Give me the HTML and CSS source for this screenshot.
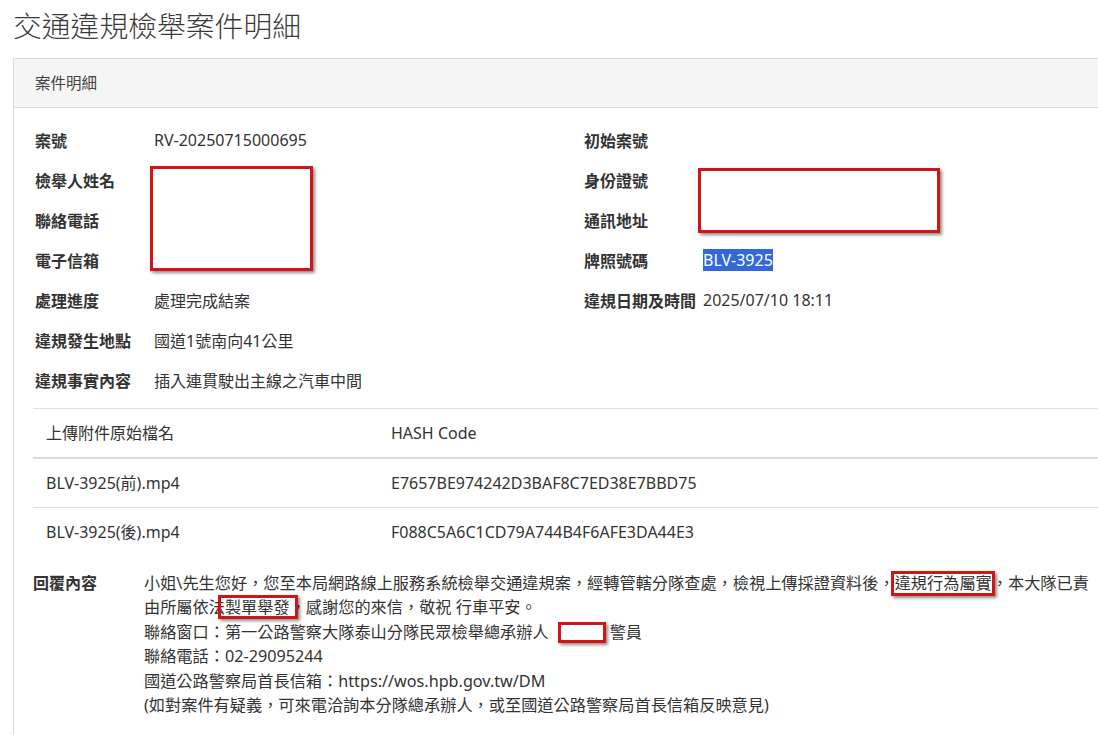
FILE: index.html
```html
<!DOCTYPE html>
<html lang="zh-Hant">
<head>
<meta charset="utf-8">
<title>交通違規檢舉案件明細</title>
<link rel="stylesheet" href="styles.css">
</head>
<body>
<div class="page">
  <h1 class="title">交通違規檢舉案件明細</h1>
  <section class="card">
    <div class="card-head">案件明細</div>
    <div class="card-body">
      <div class="details">
        <div class="lbl">案號</div><div class="val">RV-20250715000695</div>
        <div class="lbl">初始案號</div><div class="val"></div>
        <div class="lbl">檢舉人姓名</div><div class="val"></div>
        <div class="lbl">身份證號</div><div class="val"></div>
        <div class="lbl">聯絡電話</div><div class="val"></div>
        <div class="lbl">通訊地址</div><div class="val"></div>
        <div class="lbl">電子信箱</div><div class="val"></div>
        <div class="lbl">牌照號碼</div><div class="val"><span class="sel">BLV-3925</span></div>
        <div class="lbl">處理進度</div><div class="val">處理完成結案</div>
        <div class="lbl">違規日期及時間</div><div class="val">2025/07/10 18:11</div>
        <div class="lbl">違規發生地點</div><div class="val">國道1號南向41公里</div>
        <div></div><div></div>
        <div class="lbl">違規事實內容</div><div class="val">插入連貫駛出主線之汽車中間</div>
        <div></div><div></div>
        <div class="redact redact-a"></div>
        <div class="redact redact-b"></div>
      </div>

      <table class="files">
        <colgroup><col class="col-name"><col></colgroup>
        <thead>
          <tr><th>上傳附件原始檔名</th><th>HASH Code</th></tr>
        </thead>
        <tbody>
          <tr><td>BLV-3925(前).mp4</td><td>E7657BE974242D3BAF8C7ED38E7BBD75</td></tr>
          <tr><td>BLV-3925(後).mp4</td><td>F088C5A6C1CD79A744B4F6AFE3DA44E3</td></tr>
        </tbody>
      </table>

      <div class="reply">
        <div class="reply-lbl">回覆內容</div>
        <div class="reply-text">小姐\先生您好，您至本局網路線上服務系統檢舉交通違規案，經轉管轄分隊查處，檢視上傳採證資料後，<span class="mark mark-a">違規行為屬實</span>，本大隊已責<br>由所屬依法<span class="mark mark-b">製單舉發</span>，感謝您的來信，敬祝 行車平安。<br>聯絡窗口：第一公路警察大隊泰山分隊民眾檢舉總承辦人<span class="redact-inline"></span>警員<br>聯絡電話：02-29095244<br>國道公路警察局首長信箱：https://wos.hpb.gov.tw/DM<br>(如對案件有疑義，可來電洽詢本分隊總承辦人，或至國道公路警察局首長信箱反映意見)</div>
      </div>
    </div>
  </section>
</div>
</body>
</html>
```

FILE: styles.css
```css
html, body {
  margin: 0;
  padding: 0;
  background: #ffffff;
  overflow: hidden;
}

body {
  font-family: "Noto Sans", "Noto Sans CJK TC", sans-serif;
  color: #333333;
  font-size: 16px;
}

.page {
  padding: 8px 0 0 13px;
}

.title {
  margin: 0 0 15px 0;
  font-size: 28.8px;
  line-height: 35px;
  font-weight: 300;
  color: #3a3a3a;
  letter-spacing: 0;
}

.card {
  width: 1120px;
  border: 1px solid #dddddd;
  border-bottom: 0;
  background: #ffffff;
}

.card-head {
  background: #f5f5f5;
  border-bottom: 1px solid #dddddd;
  padding: 13px 21px;
  line-height: 22px;
  font-size: 15.5px;
  color: #444444;
}

.card-body {
  padding: 12px 0 40px 19px;
}

.details {
  position: relative;
  margin-left: 2px;
  display: grid;
  grid-template-columns: 119px 430px 119px 1fr;
  grid-auto-rows: 40px;
  align-items: center;
}

.lbl {
  font-weight: 700;
  color: #333333;
  white-space: nowrap;
}

.val {
  color: #333333;
  white-space: nowrap;
}

.sel {
  display: inline-block;
  background: #3269d4;
  color: #ffffff;
  line-height: 22px;
}

.redact {
  position: absolute;
  border: 3px solid #cf1515;
  background: #ffffff;
  box-shadow: 2px 2px 3px rgba(0, 0, 0, 0.45);
  box-sizing: border-box;
}

.redact-a {
  left: 115px;
  top: 46px;
  width: 163px;
  height: 105px;
}

.redact-b {
  left: 663px;
  top: 48px;
  width: 242px;
  height: 65px;
}

.files {
  width: calc(100% - 19px);
  margin-top: 8px;
  border-collapse: collapse;
  table-layout: fixed;
  border-top: 1px solid #dddddd;
}

.col-name {
  width: 345px;
}

.files th,
.files td {
  text-align: left;
  font-weight: 400;
  padding: 13px 13px;
  line-height: 22px;
  color: #333333;
  white-space: nowrap;
}

.files th {
  border-bottom: 2px solid #dddddd;
}

.files td {
  border-top: 1px solid #dddddd;
}

.reply {
  margin-top: 15px;
  display: grid;
  grid-template-columns: 111px 1fr;
}

.reply-lbl {
  font-weight: 700;
  line-height: 24.4px;
  font-size: 16px;
}

.reply-text {
  font-size: 16.2px;
  line-height: 24.4px;
  white-space: nowrap;
}

.mark {
  position: relative;
}

.mark::after {
  content: "";
  position: absolute;
  border: 3px solid #cf1515;
  box-shadow: 2px 2px 3px rgba(0, 0, 0, 0.45);
}

.mark-a::after {
  left: -4px;
  right: -3px;
  top: -1px;
  bottom: -2px;
}

.mark-b::after {
  left: -7px;
  right: -8px;
  top: -1px;
  bottom: -1px;
}

.redact-inline {
  display: inline-block;
  box-sizing: border-box;
  width: 48px;
  height: 21px;
  margin: 0 4px 0 9px;
  vertical-align: -5px;
  border: 3px solid #cf1515;
  background: #ffffff;
  box-shadow: 2px 2px 3px rgba(0, 0, 0, 0.45);
}
```
